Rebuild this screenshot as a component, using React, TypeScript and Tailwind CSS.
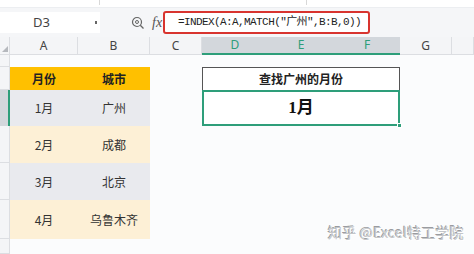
import React from "react";

const cjk = { fontFamily: '"Noto Sans CJK SC", "Noto Sans", sans-serif' };

export default function App() {
  const headers = [
    { l: "A", c: "col-start-2", sel: false },
    { l: "B", c: "col-start-3", sel: false },
    { l: "C", c: "col-start-4", sel: false },
    { l: "D", c: "col-start-5", sel: true },
    { l: "E", c: "col-start-6", sel: true },
    { l: "F", c: "col-start-7", sel: true },
    { l: "G", c: "col-start-8", sel: false },
    { l: "", c: "col-start-9", sel: false },
  ];
  const rowHeads = [
    { r: "row-start-2", sel: false },
    { r: "row-start-3", sel: false },
    { r: "row-start-4", sel: true },
    { r: "row-start-5", sel: false },
    { r: "row-start-6", sel: false },
    { r: "row-start-7", sel: false },
    { r: "row-start-8", sel: false },
  ];
  const data = [
    { m: "1月", c: "广州", r: "row-start-4", bg: "bg-[#e9eaee]" },
    { m: "2月", c: "成都", r: "row-start-5", bg: "bg-[#fdf0d6]" },
    { m: "3月", c: "北京", r: "row-start-6", bg: "bg-[#e9eaee]" },
    { m: "4月", c: "乌鲁木齐", r: "row-start-7", bg: "bg-[#fdf0d6]" },
  ];
  return (
    <div className="relative w-[474px] h-[254px] overflow-hidden bg-[#fbfcfd] flex flex-col" style={cjk}>
      {/* top strip */}
      <div className="h-[8px] bg-white border-b border-[#eceef1] flex">
        <div className="w-[100px] border-r border-[#d8d8d8] h-[5px]" />
        <div className="w-[207px] border-r border-[#d8d8d8] h-[5px]" />
      </div>
      {/* formula bar */}
      <div className="h-[29px] flex items-center bg-[#f5f6f8]">
        <div className="w-[100px] h-[21px] bg-white flex items-center relative">
          <span className="absolute left-[33px] text-[13px] text-[#444]" style={{ fontFamily: '"Noto Sans", sans-serif' }}>D3</span>
          <span className="absolute left-[95px] top-[9px] w-[2px] h-[3px] bg-[#666]" />
        </div>
        <div className="w-[30px]" />
        <svg width="14" height="14" viewBox="0 0 14 14" className="ml-[1px]">
          <circle cx="6" cy="6" r="4.5" fill="none" stroke="#666" strokeWidth="1.2" />
          <circle cx="6" cy="6" r="1.5" fill="none" stroke="#666" strokeWidth="1" />
          <line x1="9.3" y1="9.3" x2="12.5" y2="12.5" stroke="#666" strokeWidth="1.3" />
        </svg>
        <span className="ml-[7px] text-[14px] italic text-[#555]" style={{ fontFamily: '"Liberation Serif", serif' }}>fx</span>
        <div className="ml-[1px] w-[207px] h-[23px] bg-white border-2 border-[#d8342f] rounded-[3px] flex items-center pl-[13px]">
          <span className="text-[11px] tracking-[-0.6px] text-[#222]" style={{ fontFamily: '"Liberation Mono", "Noto Sans CJK SC", monospace' }}>
            =INDEX(A:A,MATCH("广州",B:B,0))
          </span>
        </div>
      </div>
      {/* sheet */}
      <div className="grid grid-cols-[10px_68px_72px_52px_66px_66px_66px_52px_22px] grid-rows-[18px_12px_23px_36px_37px_37px_39px_1fr] flex-1 bg-[#fbfcfd]">
        <div className="col-start-1 row-start-1 bg-[#f4f5f7] border-b border-r border-[#dcdee2] relative">
          <svg width="6" height="6" viewBox="0 0 6 6" className="absolute right-[1px] bottom-[2px]">
            <polygon points="6,0 6,6 0,6" fill="#b5b8bd" />
          </svg>
        </div>
        {headers.map((h, i) => (
          <div
            key={i}
            className={`${h.c} row-start-1 flex items-center justify-center text-[12px] ${
              h.sel
                ? "bg-[#d3d7dc] text-[#2e9e7a] border-b-2 border-[#2e9e7a]"
                : "bg-[#f4f5f7] text-[#444] border-b border-r border-[#dcdee2]"
            }`}
            style={{ fontFamily: '"Noto Sans", sans-serif' }}
          >
            {h.l}
          </div>
        ))}
        {rowHeads.map((r, i) => (
          <div
            key={i}
            className={`col-start-1 ${r.r} ${
              r.sel ? "bg-[#d3d7dc] border-r-2 border-[#2e9e7a]" : "bg-[#f4f5f7] border-r border-b border-[#dcdee2]"
            }`}
          />
        ))}
        <div className="col-start-2 row-start-3 bg-[#ffc000] flex items-center justify-center text-[12px] font-bold text-[#222]">月份</div>
        <div className="col-start-3 row-start-3 bg-[#ffc000] flex items-center justify-center text-[12px] font-bold text-[#222]">城市</div>
        {data.map((d, i) => (
          <React.Fragment key={i}>
            <div className={`col-start-2 ${d.r} ${d.bg} flex items-center justify-center text-[12px] text-[#333]`}>{d.m}</div>
            <div className={`col-start-3 ${d.r} ${d.bg} flex items-center justify-center text-[12px] text-[#333]`}>{d.c}</div>
          </React.Fragment>
        ))}
        <div className="col-start-5 col-span-3 row-start-3 border border-b-0 border-[#555] flex items-center justify-center text-[12px] font-bold text-[#222] bg-white">
          查找广州的月份
        </div>
        <div className="col-start-5 col-span-3 row-start-4 border-2 border-[#2e9e7a] flex items-center justify-center bg-white relative">
          <span className="text-[17px] font-bold text-[#111]" style={{ fontFamily: '"Liberation Serif", "Noto Sans CJK SC", serif' }}>1月</span>
          <span className="absolute right-[-4px] bottom-[-4px] w-[5px] h-[5px] bg-[#2e9e7a] border border-white" />
        </div>
      </div>
      <div
        className="absolute left-[328px] top-[222px] text-[14px] text-[#c4c6c9] tracking-[0.2px]"
        style={{ textShadow: "1px 1px 0 #fff, -1px -1px 0 #9a9ca0" }}
      >
        知乎 @Excel特工学院
      </div>
    </div>
  );
}
